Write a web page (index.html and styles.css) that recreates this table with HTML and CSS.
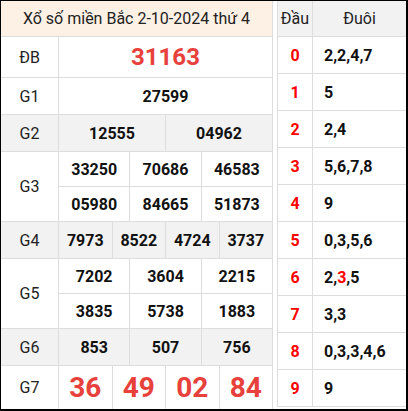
FILE: index.html
```html
<!DOCTYPE html>
<html lang="vi">
<head>
<meta charset="utf-8">
<link rel="stylesheet" href="styles.css">
</head>
<body>
<div class="frame">
  <div class="results">
    <div class="title">Xổ số miền Bắc 2-10-2024 thứ 4</div>

    <div class="lbl r-db">ĐB</div>
    <div class="num db span12">31163</div>

    <div class="lbl r-g1">G1</div>
    <div class="num span12">27599</div>

    <div class="lbl alt">G2</div>
    <div class="num alt span6">12555</div>
    <div class="num alt span6">04962</div>

    <div class="lbl tall">G3</div>
    <div class="num span4 short">33250</div>
    <div class="num span4 short">70686</div>
    <div class="num span4 short">46583</div>
    <div class="num span4 short">05980</div>
    <div class="num span4 short">84665</div>
    <div class="num span4 short">51873</div>

    <div class="lbl alt">G4</div>
    <div class="num alt span3">7973</div>
    <div class="num alt span3">8522</div>
    <div class="num alt span3">4724</div>
    <div class="num alt span3">3737</div>

    <div class="lbl tall">G5</div>
    <div class="num span4 short">7202</div>
    <div class="num span4 short">3604</div>
    <div class="num span4 short">2215</div>
    <div class="num span4 short">3835</div>
    <div class="num span4 short">5738</div>
    <div class="num span4 short">1883</div>

    <div class="lbl alt">G6</div>
    <div class="num alt span4">853</div>
    <div class="num alt span4">507</div>
    <div class="num alt span4">756</div>

    <div class="lbl">G7</div>
    <div class="num g7 span3">36</div>
    <div class="num g7 span3">49</div>
    <div class="num g7 span3">02</div>
    <div class="num g7 span3">84</div>
  </div>

  <div class="loto">
    <div class="lhead">Đầu</div>
    <div class="lhead">Đuôi</div>
    <div class="head">0</div><div class="tail">2,2,4,7</div>
    <div class="head">1</div><div class="tail">5</div>
    <div class="head">2</div><div class="tail">2,4</div>
    <div class="head">3</div><div class="tail">5,6,7,8</div>
    <div class="head">4</div><div class="tail">9</div>
    <div class="head">5</div><div class="tail">0,3,5,6</div>
    <div class="head">6</div><div class="tail">2,<span class="hit">3</span>,5</div>
    <div class="head">7</div><div class="tail">3,3</div>
    <div class="head">8</div><div class="tail">0,3,3,4,6</div>
    <div class="head">9</div><div class="tail">9</div>
  </div>
</div>
</body>
</html>
```

FILE: styles.css
```css
* { box-sizing: border-box; }

html, body {
  margin: 0;
  padding: 0;
  background: #fff;
}

body {
  font-family: Roboto, "Liberation Sans", Arial, sans-serif;
  color: #222;
}

.frame {
  width: 408px;
  height: 411px;
  border-style: solid;
  border-color: #000;
  border-width: 1px 2px 2px 1px;
  display: flex;
  gap: 4px;
  align-items: flex-start;
  background: #fff;
}

.results {
  width: 272px;
  height: 408px;
  display: grid;
  grid-template-columns: 57px repeat(12, 1fr);
  grid-template-rows: 35px 40px 36px 36px 34px 34px 36px 34px 34px 36px 43px;
  gap: 1px;
  background: #ddd;
  padding-right: 1px;
}

.results > div {
  background: #fff;
  display: flex;
  align-items: center;
  justify-content: center;
}

.title {
  grid-column: 1 / -1;
  background: #fdf1e6 !important;
  font-size: 16px;
  color: #222;
}

.lbl {
  font-size: 16px;
  color: #222;
}

.lbl.tall { grid-row: span 2; }

.results > .alt { background: #f2f2f2; }

.num {
  font-size: 16px;
  font-weight: 700;
  color: #111;
}

.span12 { grid-column: span 12; }
.span6 { grid-column: span 6; }
.span4 { grid-column: span 4; }
.span3 { grid-column: span 3; }

.db {
  font-size: 24px;
  color: #e8413c;
}

.g7 {
  font-size: 28px;
  color: #e8413c;
}

.loto {
  width: 129px;
  height: 406px;
  display: grid;
  grid-template-columns: 34px 93px;
  grid-template-rows: 35px repeat(10, 36px);
  gap: 1px;
  background: #ddd;
  padding: 0 0 1px 1px;
}

.loto > div {
  background: #fff;
  display: flex;
  align-items: center;
}

.loto > .lhead {
  background: #f2f2f2;
  justify-content: center;
  font-size: 16px;
  color: #222;
}

.head {
  justify-content: center;
  font-size: 16px;
  font-weight: 700;
  color: #f00;
}

.tail {
  padding-left: 11px;
  font-size: 16px;
  font-weight: 700;
  color: #111;
}

.hit { color: #f00; }
```
